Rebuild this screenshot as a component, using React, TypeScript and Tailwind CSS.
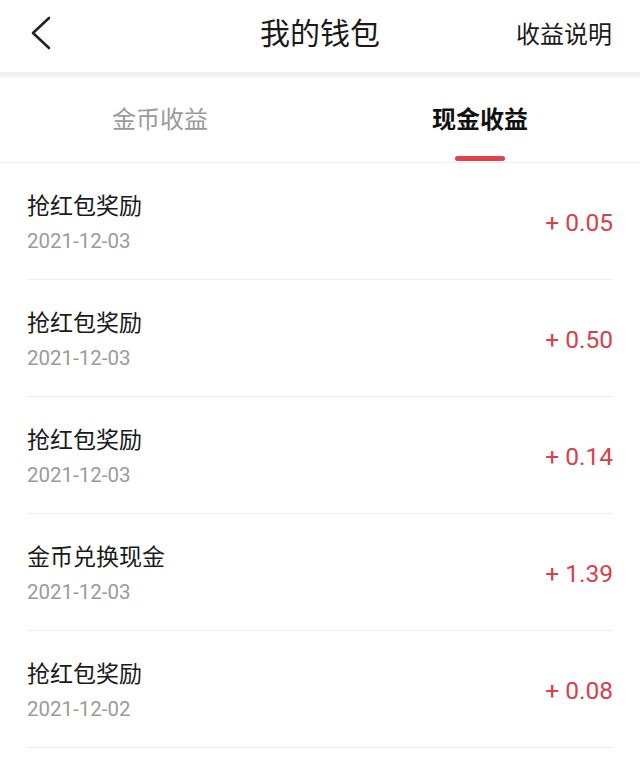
const records = [
  { title: '抢红包奖励', date: '2021-12-03', amount: '+ 0.05' },
  { title: '抢红包奖励', date: '2021-12-03', amount: '+ 0.50' },
  { title: '抢红包奖励', date: '2021-12-03', amount: '+ 0.14' },
  { title: '金币兑换现金', date: '2021-12-03', amount: '+ 1.39' },
  { title: '抢红包奖励', date: '2021-12-02', amount: '+ 0.08' },
]

const cjk = "font-['Noto_Sans_CJK_SC',sans-serif]"

export default function App() {
  return (
    <div className="w-[640px] h-[759px] overflow-hidden bg-white">
      {/* header */}
      <div className="h-[72px] flex items-center justify-between pl-[30px] pr-[28px] relative">
        <svg width="22" height="34" viewBox="0 0 22 34" className="mt-[-6px]">
          <polyline points="19,2 3,17 19,32" fill="none" stroke="#222" strokeWidth="2.6" strokeLinecap="round" strokeLinejoin="round" />
        </svg>
        <h1 className={`absolute left-1/2 -translate-x-1/2 top-[9px] text-[30px] text-[#1a1a1a] ${cjk}`}>我的钱包</h1>
        <span className={`text-[24px] text-[#1a1a1a] mt-[-6px] ${cjk}`}>收益说明</span>
      </div>
      <div className="h-[6px] bg-gradient-to-b from-[#ececec] to-[#f7f7f7]" />

      {/* tabs */}
      <div className="h-[85px] flex border-b border-[#eeeeee]">
        <div className="flex-1 flex flex-col items-center justify-center">
          <span className={`text-[24px] text-[#9a9a9a] mt-[-4px] ${cjk}`}>金币收益</span>
        </div>
        <div className="flex-1 flex flex-col items-center justify-center relative">
          <span className={`text-[24px] font-bold text-[#111] mt-[-4px] ${cjk}`}>现金收益</span>
          <div className="absolute bottom-[1px] w-[50px] h-[5px] rounded-full bg-[#e0414c]" />
        </div>
      </div>

      {/* list */}
      <div className="px-[27px]">
        {records.map((r, i) => (
          <div key={i} className="h-[117px] flex items-start justify-between border-b border-[#eeeeee]">
            <div className="flex flex-col pt-[25px]">
              <span className={`text-[23px] leading-[32px] text-[#1a1a1a] ${cjk}`}>{r.title}</span>
              <span className="text-[20.5px] leading-[28px] mt-[7px] text-[#9b9b9b] font-['Roboto',sans-serif]">{r.date}</span>
            </div>
            <span className="text-[24.5px] leading-[32px] mt-[44px] text-[#d9404a] font-['Roboto',sans-serif]">{r.amount}</span>
          </div>
        ))}
      </div>
    </div>
  )
}
